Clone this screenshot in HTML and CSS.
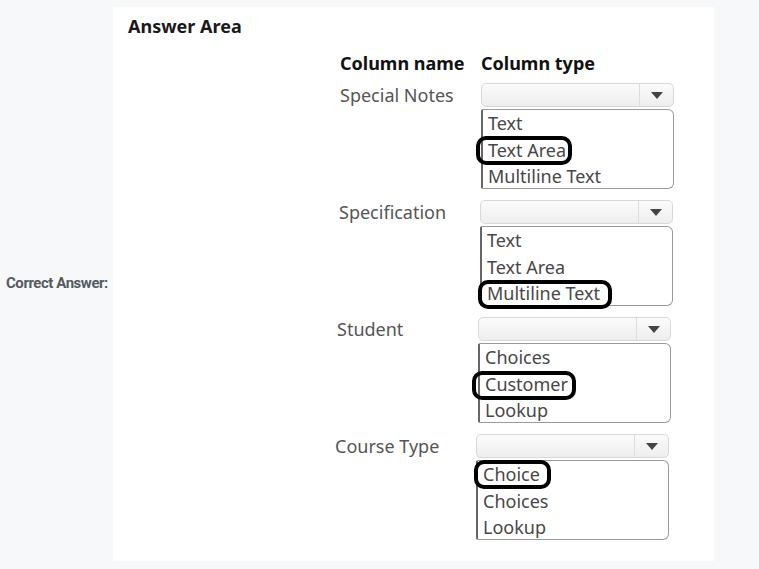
FILE: index.html
```html
<!DOCTYPE html>
<html>
<head>
<meta charset="utf-8">
<link rel="stylesheet" href="styles.css">
</head>
<body>
<div class="page">
  <div class="side"><span class="side-label">Correct Answer:</span></div>
  <div class="panel">
    <div class="title">Answer Area</div>
    <div class="table">
      <div class="head">
        <div class="hname">Column name</div>
        <div class="htype">Column type</div>
      </div>
      <div class="row">
        <div class="name">Special Notes</div>
        <div class="type">
          <div class="select"><span class="arrow"></span></div>
          <div class="list">
            <div class="item">Text</div>
            <div class="item"><span class="mark m1">Text Area</span></div>
            <div class="item">Multiline Text</div>
          </div>
        </div>
      </div>
      <div class="row r2">
        <div class="name">Specification</div>
        <div class="type">
          <div class="select"><span class="arrow"></span></div>
          <div class="list">
            <div class="item">Text</div>
            <div class="item">Text Area</div>
            <div class="item"><span class="mark m2">Multiline Text</span></div>
          </div>
        </div>
      </div>
      <div class="row r3">
        <div class="name">Student</div>
        <div class="type">
          <div class="select"><span class="arrow"></span></div>
          <div class="list">
            <div class="item">Choices</div>
            <div class="item"><span class="mark m3">Customer</span></div>
            <div class="item">Lookup</div>
          </div>
        </div>
      </div>
      <div class="row r4">
        <div class="name">Course Type</div>
        <div class="type">
          <div class="select"><span class="arrow"></span></div>
          <div class="list">
            <div class="item"><span class="mark m4">Choice</span></div>
            <div class="item">Choices</div>
            <div class="item">Lookup</div>
          </div>
        </div>
      </div>
    </div>
  </div>
</div>
</body>
</html>
```

FILE: styles.css
```css
html, body {
  margin: 0;
  padding: 0;
  background: #f7f8fa;
}
.page {
  display: flex;
  width: 759px;
  height: 569px;
}
.side {
  width: 113px;
  display: flex;
  align-items: center;
}
.side-label {
  margin-left: 6px;
  margin-top: -4px;
  font-family: Roboto, "Liberation Sans", sans-serif;
  font-weight: 700;
  font-size: 15px;
  letter-spacing: -0.45px;
  color: #555a60;
}
.panel {
  margin-top: 7px;
  width: 601px;
  height: 554px;
  background: #ffffff;
  box-sizing: border-box;
  padding-top: 7px;
  font-family: "Noto Sans", "Open Sans", sans-serif;
}
.title {
  margin-left: 15px;
  font-size: 18px;
  font-weight: 700;
  line-height: 24px;
  color: #1a1a1a;
}
.table {
  margin-left: 227px;
  margin-top: 14px;
}
.head {
  display: grid;
  grid-template-columns: 141px 193px;
  font-size: 18px;
  font-weight: 700;
  line-height: 22px;
  color: #111;
  margin-bottom: 9px;
}
.row {
  display: grid;
  grid-template-columns: 141px 193px;
  margin-bottom: 11px;
}
.r2 { margin-left: -1px; }
.r3 { margin-left: -3px; }
.r4 { margin-left: -5px; }
.name {
  font-size: 18px;
  line-height: 24px;
  color: #555;
}
.type {
  display: flex;
  flex-direction: column;
  gap: 2px;
}
.select {
  height: 24px;
  box-sizing: border-box;
  border: 1px solid #d8d8d8;
  border-radius: 5px;
  background: linear-gradient(#fbfbfb, #eeeeee);
  display: flex;
  justify-content: flex-end;
}
.arrow {
  width: 33px;
  border-left: 1px solid #dddddd;
  display: flex;
  align-items: center;
  justify-content: center;
}
.arrow::after {
  content: "";
  border-left: 6px solid transparent;
  border-right: 6px solid transparent;
  border-top: 7px solid #444;
  margin-left: 1px;
}
.list {
  height: 80px;
  box-sizing: border-box;
  border: 1px solid #9a9a9a;
  border-left: 2px solid #666;
  border-radius: 2px 6px 6px 2px;
  padding-left: 5px;
  background: #fff;
}
.item {
  font-size: 18px;
  line-height: 26.5px;
  color: #474747;
  white-space: nowrap;
}
.mark {
  position: relative;
}
.mark::before {
  content: "";
  position: absolute;
  top: -2px;
  bottom: -3px;
  left: -12px;
  right: -6px;
  border: 4px solid #000;
  border-radius: 10px;
}
.m2::before { left: -9px; right: -12px; top: -1px; bottom: -4px; }
.m3::before { left: -13px; right: -8px; top: -1px; bottom: -4px; }
.m4::before { left: -9px; right: -11px; top: -2px; bottom: -3px; }
```
